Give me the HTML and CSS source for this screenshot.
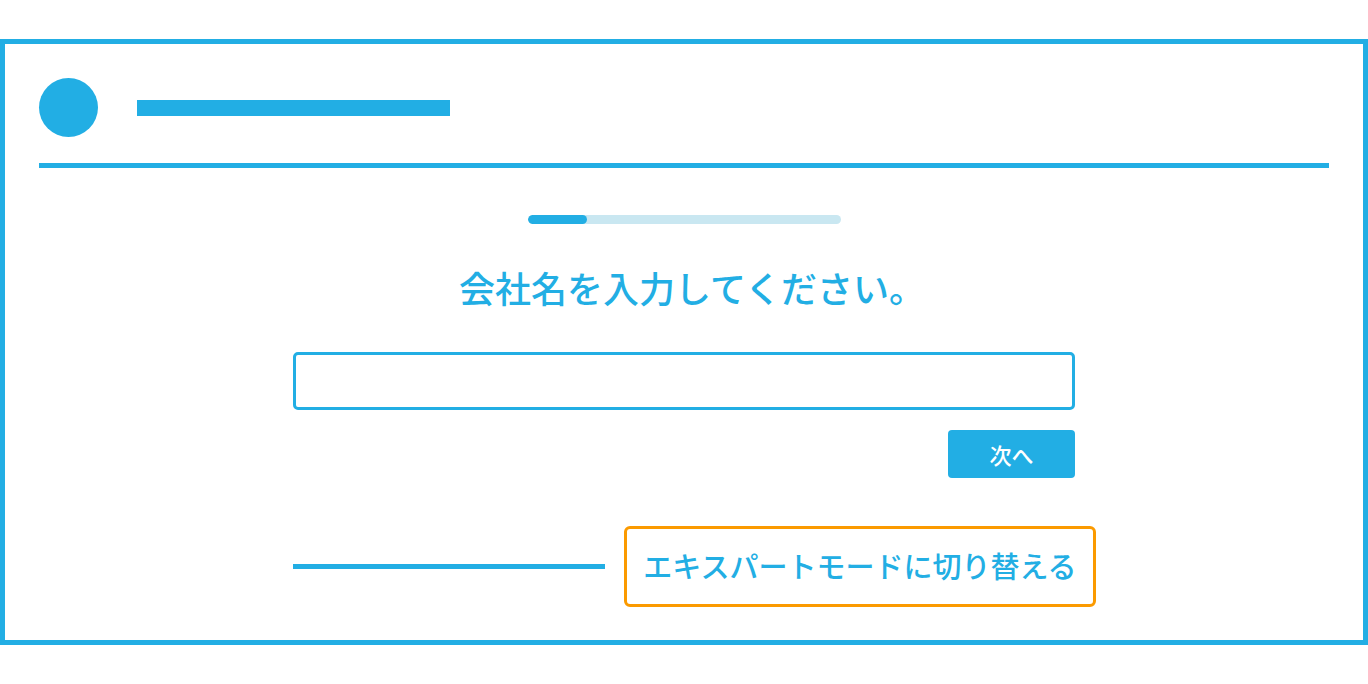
FILE: index.html
```html
<!DOCTYPE html>
<html lang="ja">
<head>
<meta charset="utf-8">
<title>会社名を入力</title>
<link rel="stylesheet" href="styles.css">
</head>
<body>
<div class="frame">
  <header class="header">
    <div class="logo"></div>
    <div class="title-bar"></div>
  </header>
  <div class="divider"></div>
  <main class="main">
    <div class="progress"><div class="progress-fill" style="width:59px"></div></div>
    <h1 class="heading">会社名を入力してください。</h1>
    <div class="form">
      <input class="field" type="text" aria-label="会社名">
      <div class="actions">
        <button class="next-btn" type="button">次へ</button>
      </div>
      <div class="expert-row">
        <div class="expert-line"></div>
        <button class="expert-btn" type="button">エキスパートモードに切り替える</button>
      </div>
    </div>
  </main>
</div>
</body>
</html>
```

FILE: styles.css
```css
* { box-sizing: border-box; }
html, body { margin: 0; padding: 0; background: #ffffff; }
body {
  padding-top: 39px;
  font-family: "Noto Sans CJK JP", "Noto Sans", sans-serif;
  color: #22aee4;
}
.frame {
  width: 1368px;
  height: 606px;
  border: 5px solid #22aee4;
  display: flex;
  flex-direction: column;
}
.header {
  display: flex;
  align-items: center;
  padding: 34px 34px 0 34px;
  gap: 39px;
}
.logo {
  width: 59px;
  height: 59px;
  border-radius: 50%;
  background: #22aee4;
}
.title-bar {
  width: 313px;
  height: 16px;
  background: #22aee4;
}
.divider {
  margin: 26px 34px 0 34px;
  height: 5px;
  background: #22aee4;
}
.main {
  display: flex;
  flex-direction: column;
  align-items: center;
  padding-top: 47px;
}
.progress {
  width: 313px;
  height: 9px;
  border-radius: 5px;
  background: #c9e7f1;
  overflow: hidden;
}
.progress-fill {
  height: 100%;
  border-radius: 5px;
  background: #22aee4;
}
.heading {
  margin: 38px 0 0 0;
  padding-left: 16px;
  font-size: 36px;
  line-height: 50px;
  font-weight: 500;
  letter-spacing: 0;
  color: #22aee4;
}
.form {
  width: 782px;
  margin-top: 40px;
  display: flex;
  flex-direction: column;
}
.field {
  width: 100%;
  height: 58px;
  border: 3px solid #22aee4;
  border-radius: 5px;
  background: #fff;
  outline: none;
  font-family: inherit;
  font-size: 20px;
}
.actions {
  display: flex;
  justify-content: flex-end;
  margin-top: 20px;
}
.next-btn {
  width: 127px;
  height: 48px;
  border: none;
  border-radius: 4px;
  background: #22aee4;
  color: #ffffff;
  font-family: inherit;
  font-size: 22px;
  font-weight: 500;
  padding: 0;
}
.expert-row {
  display: flex;
  align-items: center;
  gap: 19px;
  margin-top: 48px;
  width: 803px;
}
.expert-line {
  width: 312px;
  height: 5px;
  background: #22aee4;
}
.expert-btn {
  width: 472px;
  height: 81px;
  border: 3px solid #fb9a00;
  border-radius: 6px;
  background: #ffffff;
  color: #22aee4;
  font-family: inherit;
  font-size: 29px;
  font-weight: 500;
  letter-spacing: 0;
  padding: 0 0 3px 0;
}
```
